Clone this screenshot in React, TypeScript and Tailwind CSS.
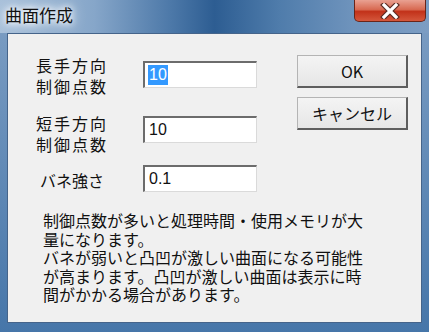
import React from 'react';

const jp = "font-['Noto_Sans_CJK_JP','Noto_Sans',sans-serif]";

const notes = [
  '制御点数が多いと処理時間・使用メモリが大',
  '量になります。',
  'バネが弱いと凸凹が激しい曲面になる可能性',
  'が高まります。凸凹が激しい曲面は表示に時',
  '間がかかる場合があります。',
];

function Field({ value, selected }: { value: string; selected?: boolean }) {
  return (
    <div className="w-[114px] h-[27px] bg-white border-t-2 border-l-2 border-t-[#6c6c6c] border-l-[#6c6c6c] border-b border-r border-b-[#dadada] border-r-[#dadada] flex items-center pl-[3px]">
      <span
        className={`font-['Liberation_Sans',sans-serif] text-[16px] leading-[20px] px-[1px] ${
          selected ? 'bg-[#3399ff] text-white' : 'text-[#111]'
        }`}
      >
        {value}
      </span>
    </div>
  );
}

function Btn({ label }: { label: string }) {
  return (
    <button className="w-[111px] h-[33px] bg-gradient-to-b from-[#f4f4f4] to-[#e6e6e6] border-t border-l border-t-[#b4b4b4] border-l-[#b4b4b4] border-b-2 border-r-2 border-b-[#5e5e5e] border-r-[#5e5e5e] flex items-center justify-center text-[16px] text-[#111]">
      {label}
    </button>
  );
}

export default function App() {
  return (
    <div className={`w-[429px] h-[332px] flex flex-col overflow-hidden bg-gradient-to-b from-[#7e9fc4] to-[#4676a9] ${jp}`}>
      {/* title bar */}
      <div className="h-[33px] flex items-start bg-[linear-gradient(90deg,#a8c0da_0%,#86a6c9_22%,#4c78a8_40%,#2d5d92_50%,#4f7cab_65%,#6e93bc_82%,#7c9dc3_100%)]">
        <span className="ml-[5px] mt-[4px] text-[17px] leading-[22px] text-[#111] [text-shadow:0_0_6px_#fff,0_0_10px_#fff,0_0_16px_#eef4fa]">
          曲面作成
        </span>
        <div className="ml-auto mr-[3px] w-[72px] h-[22px] rounded-b-[5px] border border-t-0 border-[#6a2418] bg-[linear-gradient(180deg,#e9a192_0%,#d86a52_45%,#c2321a_55%,#d4573c_100%)] flex items-center justify-center">
          <svg width="20" height="16" viewBox="0 0 20 16">
            <path d="M4 2 L16 14 M16 2 L4 14" stroke="#5a2a22" strokeWidth="5.5" strokeLinecap="square" />
            <path d="M4 2 L16 14 M16 2 L4 14" stroke="#fff" strokeWidth="3.2" strokeLinecap="square" />
          </svg>
        </div>
      </div>

      {/* client */}
      <div className="flex-1 mx-[7px] mb-[9px] bg-[#f0f0f0] border border-[#45648a] flex flex-col text-[#111]">
        <div className="flex">
          <div className="flex flex-col pl-[28px] pt-[21px]">
            <div className="flex h-[40px]">
              <div className="w-[107px] text-[16px] leading-[21px] tracking-[2px]">
                <div>長手方向</div>
                <div>制御点数</div>
              </div>
              <div className="mt-[6px]">
                <Field value="10" selected />
              </div>
            </div>
            <div className="flex h-[40px] mt-[18px]">
              <div className="w-[107px] text-[16px] leading-[21px] tracking-[2px]">
                <div>短手方向</div>
                <div>制御点数</div>
              </div>
              <div className="mt-[3px]">
                <Field value="10" />
              </div>
            </div>
            <div className="flex h-[27px] mt-[12px]">
              <div className="w-[107px] pl-[4px] text-[16px] leading-[21px] mt-[5px]">バネ強さ</div>
              <Field value="0.1" />
            </div>
          </div>
          <div className="flex flex-col gap-[9px] ml-[40px] pt-[21px]">
            <Btn label="OK" />
            <Btn label="キャンセル" />
          </div>
        </div>
        <div className="ml-[35px] mt-[19px] text-[16px] leading-[18.5px] flex flex-col">
          {notes.map((line) => (
            <div key={line} className="h-[18.5px] whitespace-nowrap">
              {line}
            </div>
          ))}
        </div>
      </div>
    </div>
  );
}
